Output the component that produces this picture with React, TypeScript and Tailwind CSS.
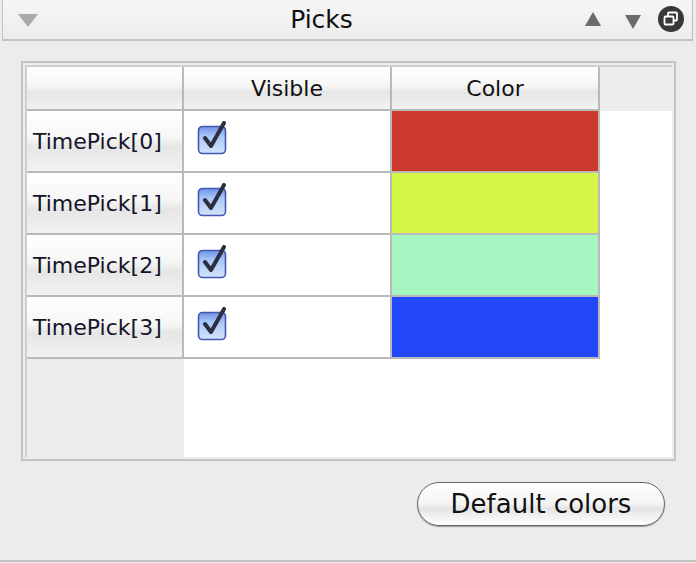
import React from 'react';

const picks = [
  { name: 'TimePick[0]', color: '#cb3a2c' },
  { name: 'TimePick[1]', color: '#d3f544' },
  { name: 'TimePick[2]', color: '#a5f6c1' },
  { name: 'TimePick[3]', color: '#2347fb' },
];

const CheckBox: React.FC = () => (
  <svg width="32" height="34" viewBox="0 0 32 34">
    <defs>
      <linearGradient id="cbFill" x1="0" y1="0" x2="0" y2="1">
        <stop offset="0" stopColor="#6f93e6" />
        <stop offset="0.35" stopColor="#a9c6f7" />
        <stop offset="1" stopColor="#d3e4fc" />
      </linearGradient>
    </defs>
    <rect x="1.5" y="5.5" width="27" height="27" rx="4" fill="url(#cbFill)" stroke="#4358b0" strokeWidth="1.6" />
    <path d="M8 17 L14 25 L27 2" fill="none" stroke="#2b2f3f" strokeWidth="4" strokeLinecap="round" strokeLinejoin="round" />
  </svg>
);

const headerBg = 'bg-[linear-gradient(to_bottom,#ffffff_0%,#f6f6f6_45%,#e6e6e6_60%,#f2f2f2_100%)]';

const App: React.FC = () => {
  return (
    <div className="w-[696px] h-[563px] bg-[#ececec] font-['DejaVu_Sans',sans-serif] text-[#111] overflow-hidden">
      {/* Title bar */}
      <div className="ml-[2px] w-[691px] h-[41px] border-x border-b-2 border-[#c2c2c2] bg-[linear-gradient(to_bottom,#f6f6f6,#ececec)] flex items-center relative">
        <svg className="absolute left-[14px] top-[13px]" width="22" height="15" viewBox="0 0 22 15">
          <path d="M1 1 H21 L11 14 Z" fill="#a9a9a9" />
        </svg>
        <div className="flex-1 text-center text-[25px] leading-none pr-[52px]">Picks</div>
        <svg className="absolute left-[581px] top-[11px]" width="18" height="16" viewBox="0 0 18 16">
          <path d="M9 1 L17 15 H1 Z" fill="#6b6b6b" />
        </svg>
        <svg className="absolute left-[621px] top-[14px]" width="18" height="16" viewBox="0 0 18 16">
          <path d="M1 1 H17 L9 15 Z" fill="#6b6b6b" />
        </svg>
        <svg className="absolute left-[654px] top-[5px]" width="28" height="28" viewBox="0 0 28 28">
          <circle cx="14" cy="14" r="13" fill="#383838" />
          <rect x="11" y="7.5" width="9" height="8" rx="1" fill="none" stroke="#fff" strokeWidth="1.8" />
          <rect x="7.5" y="11.5" width="9" height="8" rx="1" fill="#383838" stroke="#fff" strokeWidth="1.8" />
        </svg>
      </div>

      {/* Table frame */}
      <div className="ml-[21px] mt-[20px] w-[655px] h-[400px] border-2 border-[#c3c3c3] p-[2px]">
        <div className="w-full h-full bg-white border-l-2 border-t-2 border-[#cfcfcf] flex flex-col">
          {/* header row */}
          <div className="flex h-[44px] shrink-0">
            <div className={`w-[157px] ${headerBg} border-r-2 border-b-2 border-[#b9b9b9]`} />
            <div className={`w-[208px] ${headerBg} border-r-2 border-b-2 border-[#b9b9b9] flex items-center justify-center text-[22px]`}>
              Visible
            </div>
            <div className={`w-[208px] ${headerBg} border-r-2 border-b-2 border-[#b9b9b9] flex items-center justify-center text-[22px]`}>
              Color
            </div>
            <div className="flex-1 bg-[#ececec]" />
          </div>
          {picks.map((p) => (
            <div key={p.name} className="flex h-[62px] shrink-0">
              <div className={`w-[157px] ${headerBg} border-r-2 border-b-2 border-[#b9b9b9] flex items-center pl-[6px] text-[22px] text-[#14142a]`}>
                {p.name}
              </div>
              <div className="w-[208px] bg-white border-r-2 border-b-2 border-[#b9b9b9] flex items-start pl-[13px] pt-[10px]">
                <CheckBox />
              </div>
              <div className="w-[208px] border-r-2 border-b-2 border-[#b9b9b9]">
                <div className="w-full h-full" style={{ backgroundColor: p.color }} />
              </div>
              <div className="flex-1 bg-white" />
            </div>
          ))}
          <div className="flex flex-1">
            <div className="w-[157px] bg-[#ececec]" />
            <div className="flex-1 bg-white" />
          </div>
        </div>
      </div>

      {/* Button */}
      <div className="flex justify-end pr-[31px] mt-[21px]">
        <button className="w-[248px] h-[44px] rounded-full border-[1.5px] border-[#666] bg-[linear-gradient(to_bottom,#ffffff_0%,#f3f3f3_50%,#e4e4e4_60%,#ffffff_100%)] shadow-[0_1px_1px_rgba(0,0,0,0.35)] text-[26px] text-[#111] leading-none">
          Default colors
        </button>
      </div>
      <div className="mt-[34px] h-[2px] bg-[#c4c4c4]" />
    </div>
  );
};

export default App;
